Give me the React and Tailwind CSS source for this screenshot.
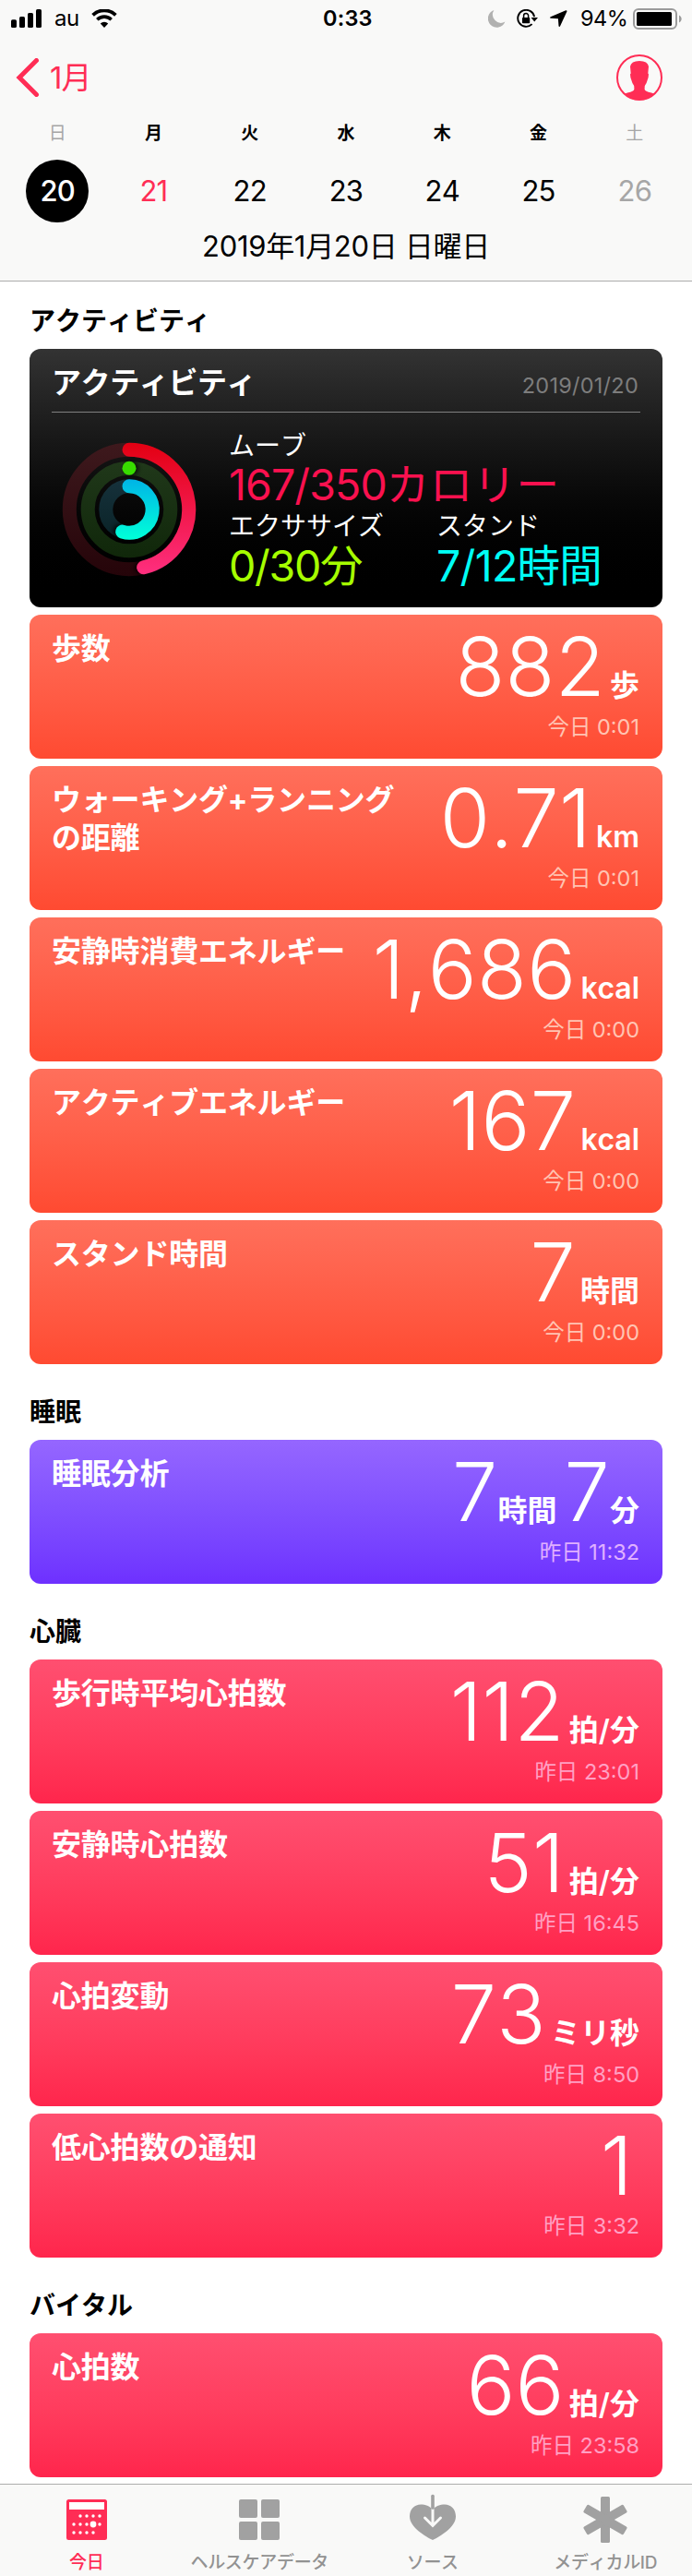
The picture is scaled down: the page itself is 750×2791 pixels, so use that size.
import React from "react";

const WEEK = [
  { day: "日", date: "20", dayClass: "text-[#a6a6a6] font-normal", dateClass: "bg-black text-white font-medium" },
  { day: "月", date: "21", dayClass: "text-black font-bold", dateClass: "text-[#ff2d55]" },
  { day: "火", date: "22", dayClass: "text-black font-bold", dateClass: "text-black" },
  { day: "水", date: "23", dayClass: "text-black font-bold", dateClass: "text-black" },
  { day: "木", date: "24", dayClass: "text-black font-bold", dateClass: "text-black" },
  { day: "金", date: "25", dayClass: "text-black font-bold", dateClass: "text-black" },
  { day: "土", date: "26", dayClass: "text-[#a6a6a6] font-normal", dateClass: "text-[#a6a6a6]" },
];

const ORANGE = "from-[#ff6f5b] to-[#ff4a31]";
const PURPLE = "from-[#9566ff] to-[#6e30ff]";
const PINK = "from-[#ff4f70] to-[#ff254c]";

function StatusBar() {
  return (
    <div className="flex h-10 items-center">
      <svg className="ml-3 shrink-0" width="33" height="20" viewBox="0 0 33 20">
        <rect x="0" y="11.3" width="6" height="8.7" rx="1.6" />
        <rect x="9" y="8" width="6" height="12" rx="1.6" />
        <rect x="18" y="4" width="6" height="16" rx="1.6" />
        <rect x="27" y="0" width="6" height="20" rx="1.6" />
      </svg>
      <span className="ml-[14px] w-[27px] text-[24px] leading-10 tracking-[-0.5px] whitespace-nowrap">au</span>
      <svg className="ml-[13px] shrink-0" width="28" height="20" viewBox="0 0 28 20">
        <path d="M1.6 6.3a18 18 0 0 1 24.8 0" fill="none" stroke="#000" strokeWidth="3.8" />
        <path d="M6.3 11.2a11.2 11.2 0 0 1 15.4 0" fill="none" stroke="#000" strokeWidth="3.6" />
        <path d="M14 20l-4.2-4.5a6.1 6.1 0 0 1 8.4 0z" />
      </svg>
      <span className="ml-[223px] w-[54px] text-[23.5px] font-semibold leading-10 tracking-[0.2px] whitespace-nowrap">0:33</span>
      <svg className="ml-[125px] shrink-0" width="19" height="19" viewBox="0 0 19 19">
        <path d="M6.4 0A9.6 9.6 0 1 0 18.4 12.6 9 9 0 0 1 6.4 0z" fill="#b1b1b0" />
      </svg>
      <svg className="ml-[12px] shrink-0" width="23" height="20" viewBox="0 0 23 20">
        <path d="M19.1 8.2A9 9 0 1 0 16.6 16.2" fill="none" stroke="#000" strokeWidth="1.9" />
        <path d="M15.6 9h7.4l-3.8 4.4z" />
        <rect x="6" y="9" width="8.2" height="6.2" rx="0.8" />
        <path d="M7.6 9.5V7a2.5 2.5 0 0 1 5 0v2.5" fill="none" stroke="#000" strokeWidth="1.5" />
      </svg>
      <svg className="ml-[13px] shrink-0" width="19" height="18" viewBox="0 0 19 18">
        <path d="M17.2.2.7 7.2c-1 .5-.8 1.5.2 1.6l8 .5.6 7.8c.1 1 1.1 1.2 1.6.2L18.4 1.4c.3-.8-.3-1.5-1.2-1.2z" />
      </svg>
      <span className="ml-[14px] w-[50px] text-[23.5px] leading-10 tracking-[-0.5px] whitespace-nowrap">94%</span>
      <svg className="ml-[7px] shrink-0" width="53" height="23" viewBox="0 0 53 23">
        <rect x="1" y="1" width="46" height="21" rx="5" fill="none" stroke="#9b9b9b" strokeWidth="2" />
        <rect x="4" y="4" width="38" height="15" rx="1.5" />
        <path d="M50 7.5c3.5 1.5 3.5 6.5 0 8z" fill="#9b9b9b" />
      </svg>
    </div>
  );
}

function Header() {
  return (
    <header className="flex h-[305px] flex-col border-b border-[#acacac] bg-[#f9f9f8]">
      <StatusBar />
      <div className="flex h-[88px] items-center justify-between pl-[17px] pr-[32px]">
        <div className="flex items-center text-[#ff2d55]">
          <svg width="26" height="42" viewBox="0 0 26 42">
            <path d="M22.5 2.5 4 21l18.5 18.5" fill="none" stroke="#ff2d55" strokeWidth="5" strokeLinecap="round" strokeLinejoin="miter" />
          </svg>
          <span className="ml-[11px] text-[33px] leading-[44px] tracking-[-1px]">1月</span>
        </div>
        <svg width="50" height="50" viewBox="0 0 50 50">
          <clipPath id="avatar"><circle cx="25" cy="25" r="24.5" /></clipPath>
          <circle cx="25" cy="25" r="24" fill="none" stroke="#ff2d55" strokeWidth="2" />
          <path
            clipPath="url(#avatar)"
            fill="#ff2d55"
            d="M8 43 L12 41.5 Q19.4 40 19.4 37.5 L19.2 34 Q17 31 16.4 28 Q15.2 26 15 21.5 L15.7 20.5 L15 13 Q16 7 25 7 Q34 7 35 13 L34.3 20.5 L35 21.5 Q34.8 26 33.6 28 Q33 31 30.8 34 L30.6 37.5 Q30.6 40 38 41.5 L42 43 L42 50 L8 50 Z"
          />
        </svg>
      </div>
      <div className="grid grid-cols-7 px-[10px] pt-[4px]">
        {WEEK.map((d) => (
          <div key={d.date} className="flex flex-col items-center">
            <span className={`h-[26px] text-[19px] leading-[26px] ${d.dayClass}`}>{d.day}</span>
            <span className={`mt-[15px] flex h-[68px] w-[68px] items-center justify-center rounded-full text-[31px] tracking-[-0.8px] ${d.dateClass}`}>
              {d.date}
            </span>
          </div>
        ))}
      </div>
      <div className="mt-[4px] text-center text-[31px] leading-[44px] tracking-[-0.3px]">2019年1月20日 日曜日</div>
    </header>
  );
}

function Rings() {
  return (
    <svg className="ml-[-4px] shrink-0" width="160" height="160" viewBox="-80 -80 160 160">
      <defs>
        <linearGradient id="mv" gradientUnits="userSpaceOnUse" x1="0" y1="-72" x2="0" y2="72">
          <stop offset="0" stopColor="#e30012" /><stop offset="1" stopColor="#ff2f80" />
        </linearGradient>
        <linearGradient id="st" gradientUnits="userSpaceOnUse" x1="0" y1="-32" x2="0" y2="32">
          <stop offset="0" stopColor="#00b5e6" /><stop offset="1" stopColor="#00ffd8" />
        </linearGradient>
        <linearGradient id="mvt" gradientUnits="userSpaceOnUse" x1="0" y1="-72" x2="0" y2="72">
          <stop offset="0" stopColor="#3e191d" /><stop offset="1" stopColor="#250409" />
        </linearGradient>
        <linearGradient id="ext" gradientUnits="userSpaceOnUse" x1="0" y1="-52" x2="0" y2="52">
          <stop offset="0" stopColor="#20381a" /><stop offset="1" stopColor="#10270a" />
        </linearGradient>
        <linearGradient id="stt" gradientUnits="userSpaceOnUse" x1="0" y1="-32" x2="0" y2="32">
          <stop offset="0" stopColor="#16313b" /><stop offset="1" stopColor="#0a2327" />
        </linearGradient>
        <filter id="soft" x="-100%" y="-100%" width="300%" height="300%"><feGaussianBlur stdDeviation="2.2" /></filter>
      </defs>
      <g fill="none" strokeWidth="15">
        <circle r="64.7" stroke="url(#mvt)" />
        <circle r="44.8" stroke="url(#ext)" />
        <circle r="25.2" stroke="url(#stt)" />
      </g>
      <g fill="#000" opacity="0.7" filter="url(#soft)">
        <circle cx="13" cy="63" r="7.5" />
        <circle cx="2.5" cy="-44.8" r="7.5" />
        <circle cx="-10" cy="23" r="7.5" />
      </g>
      <g fill="none" strokeWidth="15" strokeLinecap="round">
        <path d="M0 -64.7A64.7 64.7 0 0 1 15.65 62.78" stroke="url(#mv)" />
        <path d="M0 -25.2A25.2 25.2 0 1 1 -7.37 24.1" stroke="url(#st)" />
      </g>
      <circle cx="0" cy="-44.8" r="7.5" fill="#38dc00" />
    </svg>
  );
}

function ActivityCard() {
  return (
    <div className="h-[280px] rounded-[12px] bg-gradient-to-b from-[#333333] to-black px-6 text-white">
      <div className="flex h-[69px] items-start justify-between border-b border-[#808080] pt-[16px]">
        <span className="text-[32px] font-bold leading-[41px] tracking-[-0.4px]">アクティビティ</span>
        <span className="mr-[2px] mt-[4px] text-[23.5px] leading-[40px] tracking-[0.25px] text-[#7d7d7d]">2019/01/20</span>
      </div>
      <div className="flex">
        <div className="mt-[25px] w-[192px] pl-[8px]"><Rings /></div>
        <div className="pt-[16px]">
          <div className="text-[28px] leading-[40px]">ムーブ</div>
          <div className="text-[46.5px] leading-[44px] tracking-[-0.9px] text-[#fa114f]">167/350<span className="tracking-[0.4px]">カロリー</span></div>
          <div className="flex pt-[1px]">
            <div className="w-[225px]">
              <div className="text-[28px] leading-[45px]">エクササイズ</div>
              <div className="text-[46.5px] leading-[40px] tracking-[-1.3px] text-[#a6ff00]">0/30分</div>
            </div>
            <div>
              <div className="text-[28px] leading-[45px]">スタンド</div>
              <div className="text-[46.5px] leading-[40px] tracking-[-0.7px] text-[#00fff6]">7/12時間</div>
            </div>
          </div>
        </div>
      </div>
    </div>
  );
}

function Card({ title, values, time, color, timeColor = "text-[#ffc4b3]" }) {
  const unitGap = values.length > 1 ? "ml-0" : "ml-[5px]";
  return (
    <div className={`flex h-[156px] justify-between rounded-[12px] bg-gradient-to-b pl-6 pr-[25px] text-white ${color}`}>
      <div className="pt-[16px] text-[32px] font-bold leading-[41px] tracking-[-0.2px] whitespace-pre">{title}</div>
      <div className="flex flex-col items-end pt-[12px]">
        <div className="flex h-[88px] items-baseline whitespace-nowrap">
          {values.map(([n, unit], i) => (
            <React.Fragment key={i}>
              <span className={`text-[88px] font-light leading-[88px] tracking-[0.3px] ${i ? "ml-[8px]" : ""}`}>{n}</span>
              {unit ? <span className={`text-[32px] font-semibold leading-[32px] ${unitGap}`}>{unit}</span> : <span className="w-[7px]" />}
            </React.Fragment>
          ))}
        </div>
        <div className={`mt-[7px] text-[23.5px] leading-[30px] whitespace-nowrap ${timeColor}`}>{time}</div>
      </div>
    </div>
  );
}

function Section({ title, first, children }) {
  return (
    <section>
      <h2 className={`text-[28px] font-bold leading-[41px] text-black ${first ? "h-[73px] pt-[23px]" : "h-[82px] pt-[32px]"}`}>{title}</h2>
      <div className="flex flex-col gap-2">{children}</div>
    </section>
  );
}

function TodayIcon() {
  const dots = [];
  [15, 22, 29, 36].forEach((x) => dots.push([x, 18]));
  [8, 15, 22, 36].forEach((x) => dots.push([x, 27]));
  [8, 15, 22, 29].forEach((x) => dots.push([x, 36]));
  return (
    <svg width="44" height="50" viewBox="0 -3 44 50">
      <rect width="44" height="44" rx="2.5" fill="#ff2d55" />
      <rect x="3" y="3" width="38" height="8" fill="#fff" />
      {dots.map(([x, y]) => <circle key={`${x}-${y}`} cx={x} cy={y} r="1.7" fill="#fff" />)}
      <circle cx="29" cy="27" r="3.4" fill="#fff" />
    </svg>
  );
}

function DataIcon() {
  return (
    <svg width="44" height="50" viewBox="0 -3 44 50" fill="#a1a1a1">
      <rect width="20" height="20" rx="2" />
      <rect x="24" width="20" height="20" rx="2" />
      <rect y="24" width="20" height="20" rx="2" />
      <rect x="24" y="24" width="20" height="20" rx="2" />
    </svg>
  );
}

function SourceIcon() {
  return (
    <svg width="50" height="50" viewBox="0 0 50 50">
      <path d="M25 47C18 43.5 0 33.5 0 21.5 0 13.5 5.5 8.5 12 8.5c5 0 9.5 1.5 13 5.5 3.500-4 8-5.500 13-5.500 6.500 0 12 5 12 13C50 33.500 32 43.500 25 47z" fill="#a1a1a1" />
      <path d="M25 12.500V31M16.500 23l8.500 8.500 8.500-8.500" fill="none" stroke="#f9f9f8" strokeWidth="3" strokeLinecap="round" />
      <rect x="23.200" y="-2.300" width="3.600" height="16" rx="1.500" fill="#a1a1a1" />
    </svg>
  );
}

function MedicalIcon() {
  return (
    <svg width="50" height="50" viewBox="-25 -25 50 50" fill="#a1a1a1">
      <rect x="-5" y="-25" width="10" height="50" rx="1.5" />
      <rect x="-5" y="-25" width="10" height="50" rx="1.5" transform="rotate(60)" />
      <rect x="-5" y="-25" width="10" height="50" rx="1.5" transform="rotate(-60)" />
    </svg>
  );
}

function TabBar() {
  const tabs = [
    ["今日", TodayIcon, "text-[#ff2d55]"],
    ["ヘルスケアデータ", DataIcon, "text-[#929292]"],
    ["ソース", SourceIcon, "text-[#929292]"],
    ["メディカルID", MedicalIcon, "text-[#929292]"],
  ];
  return (
    <nav className="mt-[7px] grid h-[100px] grid-cols-4 border-t border-[#acacac] bg-[#f9f9f8]">
      {tabs.map(([label, Icon, color]) => (
        <div key={label} className={`flex flex-col items-center pt-[13px] [&>svg]:overflow-visible ${color}`}>
          <Icon />
          <span className="mt-[8px] text-[19px] font-medium leading-[28px] tracking-[-0.3px] whitespace-nowrap">{label}</span>
        </div>
      ))}
    </nav>
  );
}

export default function App() {
  const pinkTime = "text-[#ffa0c4]";
  return (
    <div className="w-[750px] bg-white font-['Inter','Noto_Sans_CJK_JP',sans-serif] text-black [font-kerning:none]" lang="ja">
      <Header />
      <main className="px-8">
        <Section title="アクティビティ" first>
          <ActivityCard />
          <Card title="歩数" values={[["882", "歩"]]} time="今日 0:01" color={ORANGE} />
          <Card title={"ウォーキング+ランニング\nの距離"} values={[["0.71", "km"]]} time="今日 0:01" color={ORANGE} />
          <Card title="安静時消費エネルギー" values={[["1,686", "kcal"]]} time="今日 0:00" color={ORANGE} />
          <Card title="アクティブエネルギー" values={[["167", "kcal"]]} time="今日 0:00" color={ORANGE} />
          <Card title="スタンド時間" values={[["7", "時間"]]} time="今日 0:00" color={ORANGE} />
        </Section>
        <Section title="睡眠">
          <Card title="睡眠分析" values={[["7", "時間"], ["7", "分"]]} time="昨日 11:32" color={PURPLE} timeColor="text-[#e0b0ff]" />
        </Section>
        <Section title="心臓">
          <Card title="歩行時平均心拍数" values={[["112", "拍/分"]]} time="昨日 23:01" color={PINK} timeColor={pinkTime} />
          <Card title="安静時心拍数" values={[["51", "拍/分"]]} time="昨日 16:45" color={PINK} timeColor={pinkTime} />
          <Card title="心拍変動" values={[["73", "ミリ秒"]]} time="昨日 8:50" color={PINK} timeColor={pinkTime} />
          <Card title="低心拍数の通知" values={[["1", ""]]} time="昨日 3:32" color={PINK} timeColor={pinkTime} />
        </Section>
        <Section title="バイタル">
          <Card title="心拍数" values={[["66", "拍/分"]]} time="昨日 23:58" color={PINK} timeColor={pinkTime} />
        </Section>
      </main>
      <TabBar />
    </div>
  );
}
